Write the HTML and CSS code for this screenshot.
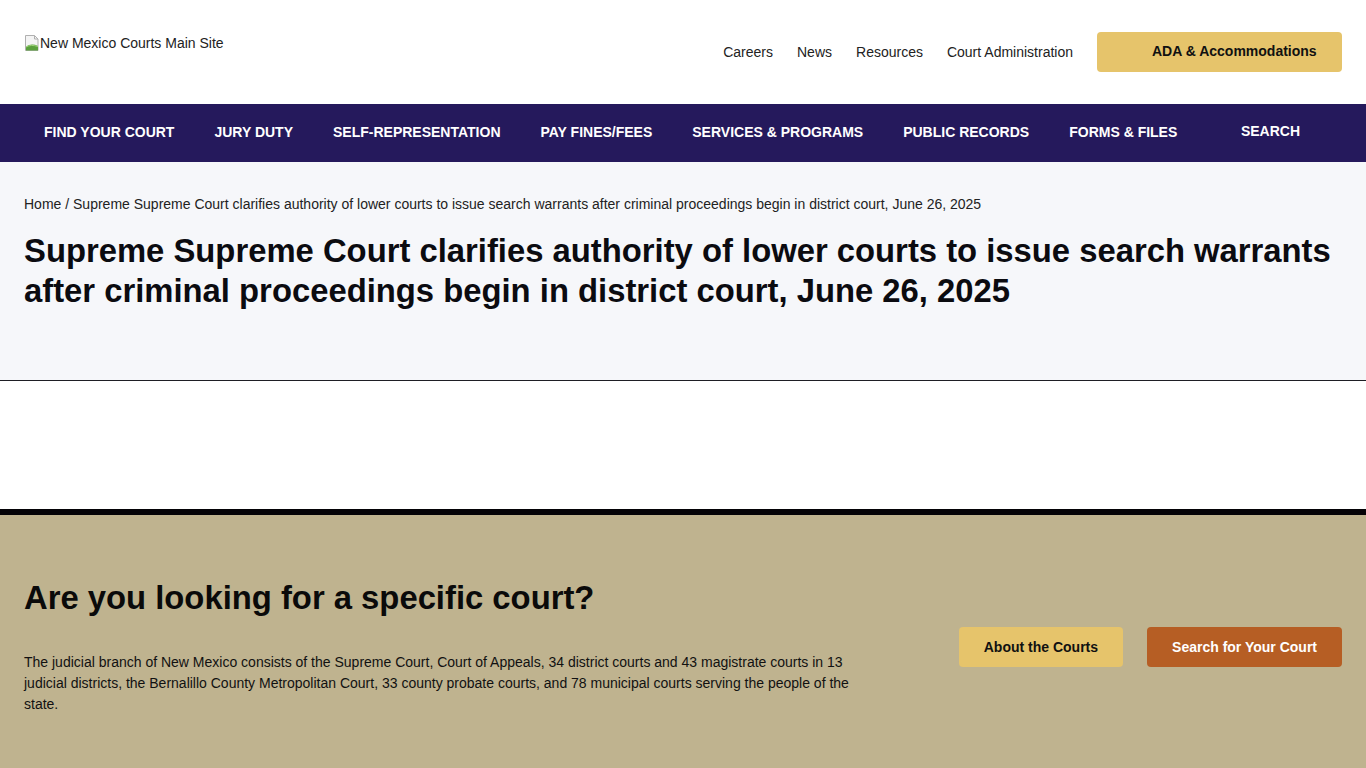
FILE: index.html
```html
<!DOCTYPE html>
<html lang="en">
<head>
<meta charset="utf-8">
<title>New Mexico Courts</title>
<link rel="stylesheet" href="styles.css">
</head>
<body>
<header class="top">
  <a class="logo" href="#">
    <svg class="broken" width="16" height="18" viewBox="0 0 16 18" aria-hidden="true">
      <path d="M1.5 1.5h9l3.5 3.5v11.5h-12.5z" fill="#f4f4f4" stroke="#b0b0b0"/>
      <path d="M10.5 1.5v3.5h3.5" fill="none" stroke="#b0b0b0"/>
      <path d="M2 16.5 L2 13 C5.5 10, 9.5 10, 14 12 L14 16.5 Z" fill="#5aa03c"/>
      <path d="M2 13 C5.5 11, 9.5 11, 14 12.5" fill="none" stroke="#9fd37a" stroke-width="1"/>
    </svg><span>New Mexico Courts Main Site</span>
  </a>
  <nav class="util">
    <a href="#">Careers</a>
    <a href="#">News</a>
    <a href="#">Resources</a>
    <a href="#">Court Administration</a>
    <a class="ada" href="#">ADA &amp; Accommodations</a>
  </nav>
</header>
<nav class="main-nav">
  <a href="#">FIND YOUR COURT</a>
  <a href="#">JURY DUTY</a>
  <a href="#">SELF-REPRESENTATION</a>
  <a href="#">PAY FINES/FEES</a>
  <a href="#">SERVICES &amp; PROGRAMS</a>
  <a href="#">PUBLIC RECORDS</a>
  <a href="#">FORMS &amp; FILES</a>
  <a class="search" href="#">SEARCH</a>
</nav>
<section class="hero">
  <div class="crumbs"><a href="#">Home</a> / Supreme Supreme Court clarifies authority of lower courts to issue search warrants after criminal proceedings begin in district court, June 26, 2025</div>
  <h1>Supreme Supreme Court clarifies authority of lower courts to issue search warrants after criminal proceedings begin in district court, June 26, 2025</h1>
</section>
<main class="content"></main>
<section class="find">
  <div class="find-text">
    <h2>Are you looking for a specific court?</h2>
    <p>The judicial branch of New Mexico consists of the Supreme Court, Court of Appeals, 34 district courts and 43 magistrate courts in 13 judicial districts, the Bernalillo County Metropolitan Court, 33 county probate courts, and 78 municipal courts serving the people of the state.</p>
  </div>
  <div class="find-btns">
    <a class="btn btn-gold" href="#">About the Courts</a>
    <a class="btn btn-rust" href="#">Search for Your Court</a>
  </div>
</section>
</body>
</html>
```
FILE: styles.css
```css
* { box-sizing: border-box; }
html, body { margin: 0; padding: 0; }
body {
  font-family: "Liberation Sans", Arial, sans-serif;
  color: #111;
  background: #fff;
}
a { color: inherit; text-decoration: none; }

.top {
  height: 104px;
  padding: 0 24px;
  display: flex;
  justify-content: space-between;
  align-items: flex-start;
}
.logo {
  display: flex;
  align-items: center;
  margin-top: 34px;
  font-size: 14px;
  line-height: 18px;
  color: #222;
}
.logo .broken { flex: none; }

.util {
  display: flex;
  align-items: center;
  gap: 24px;
  margin-top: 32px;
  font-size: 14px;
  color: #222;
}
.ada {
  display: flex;
  align-items: center;
  height: 40px;
  width: 245px;
  padding-left: 55px;
  padding-bottom: 2px;
  background: #e6c46b;
  border-radius: 4px;
  font-weight: bold;
  color: #111;
}

.main-nav {
  height: 58px;
  background: #25195c;
  padding: 0 24px;
  display: flex;
  align-items: center;
}
.main-nav a {
  color: #fff;
  font-weight: bold;
  font-size: 14px;
  padding: 0 20px;
  line-height: 20px;
  margin-top: -2px;
}
.main-nav .search {
  margin-left: auto;
  padding-right: 42px;
  margin-top: -4px;
}

.hero {
  background: #f6f7fa;
  border-bottom: 1px solid #1e1e24;
  padding: 32px 24px 0;
  height: 219px;
}
.crumbs {
  font-size: 14px;
  line-height: 20px;
  color: #222;
}
.hero h1 {
  margin: 17px 0 0;
  font-size: 32.8px;
  line-height: 40px;
  font-weight: bold;
  color: #0b0b10;
  max-width: 1318px;
}

.content {
  height: 128px;
}

.find {
  border-top: 6px solid #050307;
  background: #bfb38f;
  height: 259px;
  padding: 63px 24px 0;
  display: flex;
  align-items: flex-start;
  justify-content: space-between;
}
.find-text { max-width: 840px; }
.find h2 {
  margin: 0;
  font-size: 32.8px;
  line-height: 40px;
  color: #0a0a0a;
}
.find p {
  margin: 34px 0 0;
  font-size: 14px;
  line-height: 21px;
  color: #111;
}
.find-btns {
  display: flex;
  gap: 24px;
  margin-top: 49px;
}
.btn {
  height: 40px;
  display: flex;
  align-items: center;
  padding: 0 25px;
  border-radius: 4px;
  font-size: 14px;
  font-weight: bold;
}
.btn-gold { background: #e6c46b; color: #111; }
.btn-rust { background: #b65e24; color: #fff; }
```
